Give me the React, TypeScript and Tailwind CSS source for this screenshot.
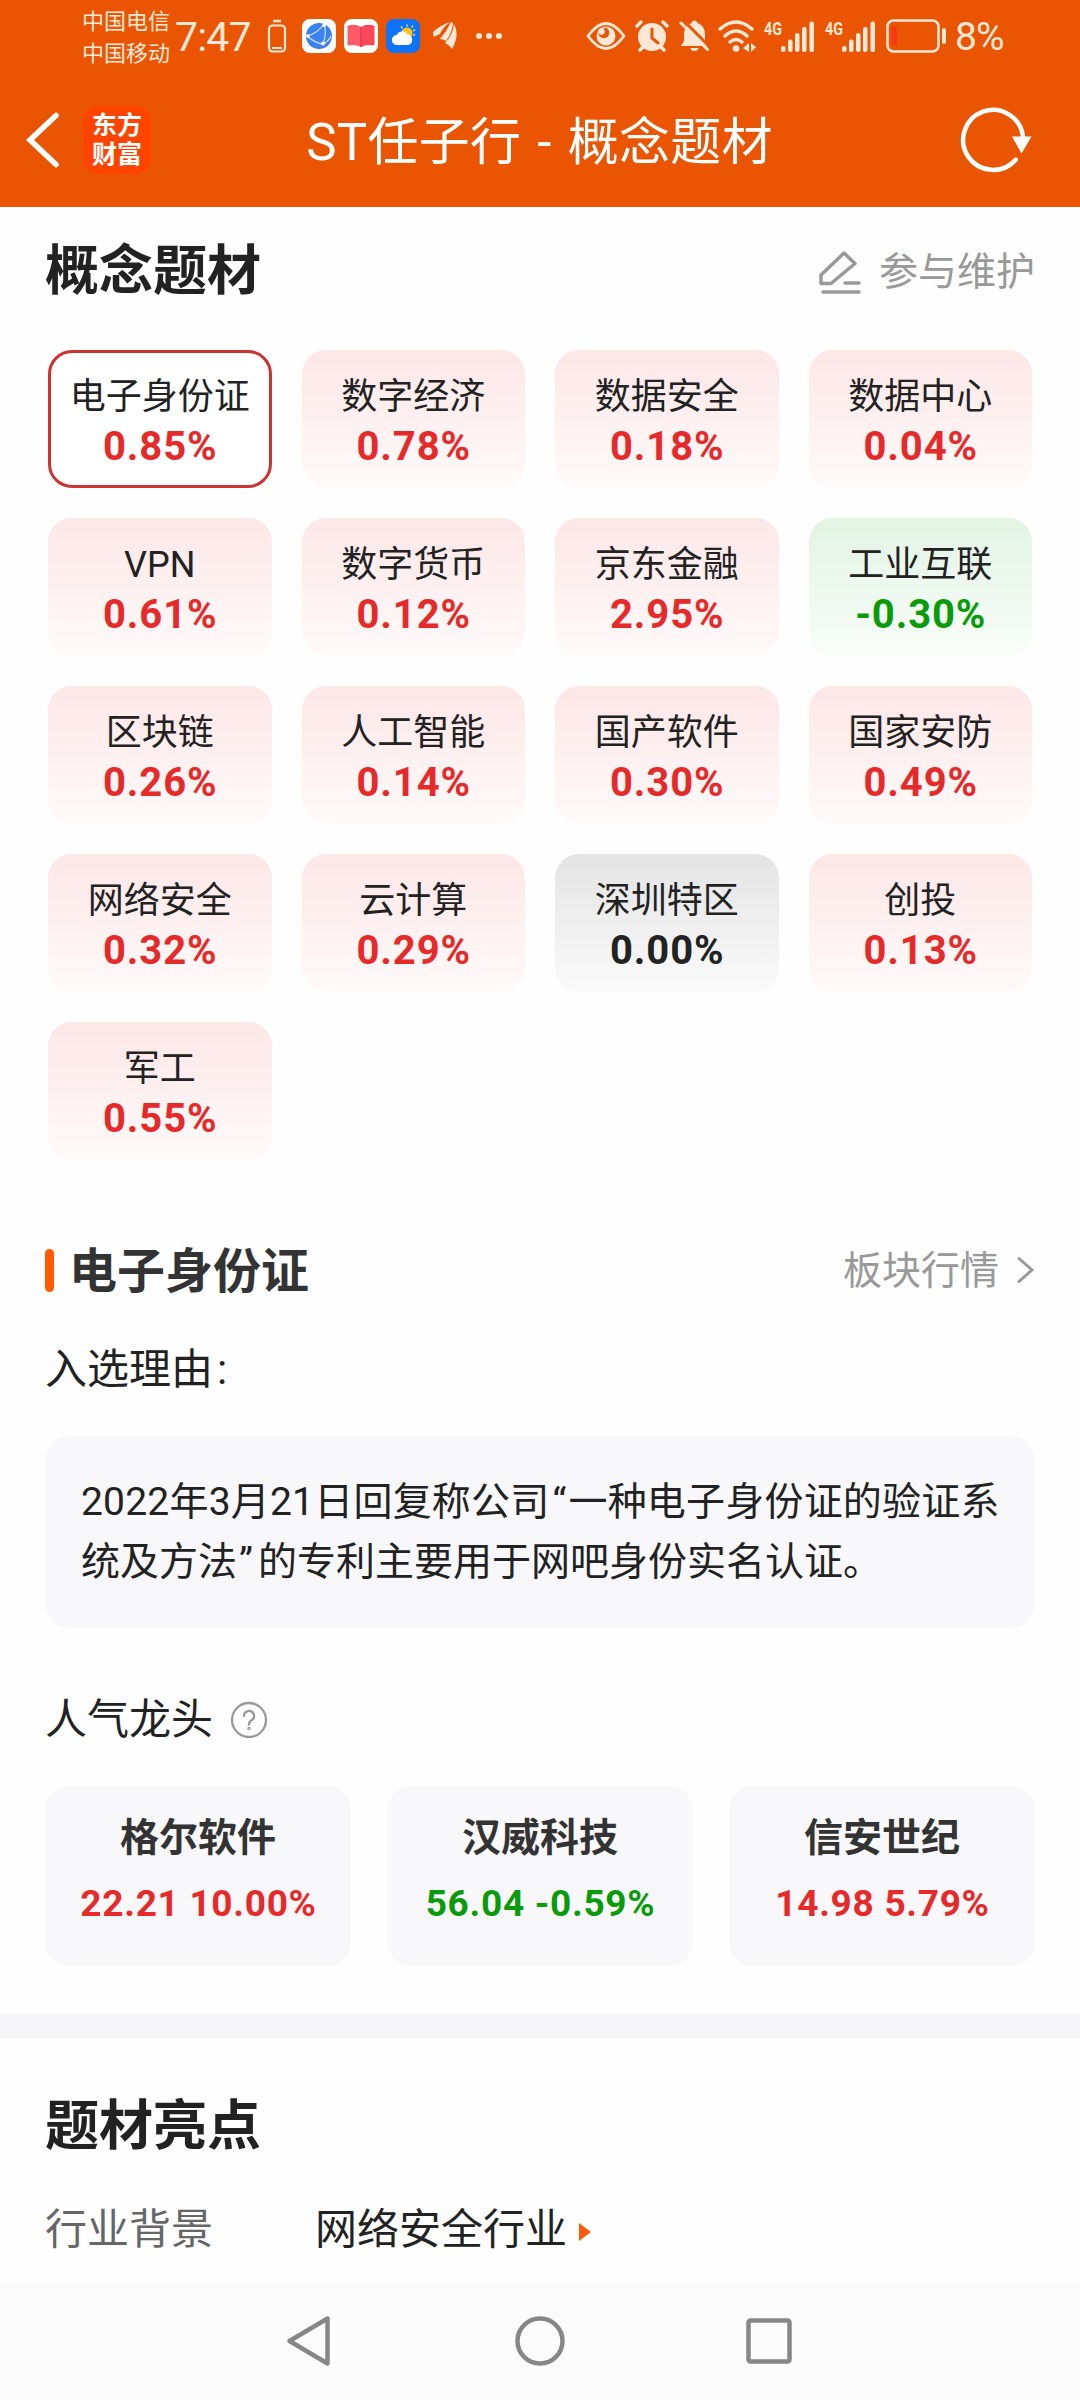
import { clsx } from "clsx";

interface Concept {
  name: string;
  change: string;
}

interface Stock {
  name: string;
  price: string;
  change: string;
}

const concepts: Concept[] = [
  { name: "电子身份证", change: "0.85%" },
  { name: "数字经济", change: "0.78%" },
  { name: "数据安全", change: "0.18%" },
  { name: "数据中心", change: "0.04%" },
  { name: "VPN", change: "0.61%" },
  { name: "数字货币", change: "0.12%" },
  { name: "京东金融", change: "2.95%" },
  { name: "工业互联", change: "-0.30%" },
  { name: "区块链", change: "0.26%" },
  { name: "人工智能", change: "0.14%" },
  { name: "国产软件", change: "0.30%" },
  { name: "国家安防", change: "0.49%" },
  { name: "网络安全", change: "0.32%" },
  { name: "云计算", change: "0.29%" },
  { name: "深圳特区", change: "0.00%" },
  { name: "创投", change: "0.13%" },
  { name: "军工", change: "0.55%" },
];

const stocks: Stock[] = [
  { name: "格尔软件", price: "22.21", change: "10.00%" },
  { name: "汉威科技", price: "56.04", change: "-0.59%" },
  { name: "信安世纪", price: "14.98", change: "5.79%" },
];

function trend(change: string) {
  const value = parseFloat(change);
  if (value > 0) return "up";
  return value < 0 ? "down" : "flat";
}

const textColor = {
  up: "text-[#e62a2a]",
  down: "text-[#0a9b0a]",
  flat: "text-[#222222]",
};

const cardColor = {
  up: "from-[#fde7e7] to-[#fffafa]",
  down: "from-[#e2f4e4] to-[#f9fdf9]",
  flat: "from-[#e4e4e4] to-[#fafafa]",
};

function Signal() {
  return (
    <svg width="51" height="42" viewBox="0 -4 51 42" fill="#ffe8d6">
      <text x="0" y="15.500" fontSize="19" fontWeight="bold" fontFamily="Roboto, sans-serif" textLength="18" lengthAdjust="spacingAndGlyphs">
        4G
      </text>
      <rect x="17" y="27" width="4.5" height="6" rx="2" />
      <rect x="24" y="20.5" width="4.5" height="12.5" rx="2" />
      <rect x="31" y="14" width="4.5" height="19" rx="2" />
      <rect x="38" y="8" width="4.5" height="25" rx="2" />
      <rect x="45.5" y="2.5" width="4.5" height="30.5" rx="2" />
    </svg>
  );
}

function StatusBar() {
  return (
    <div className="flex h-[72px] items-center pl-[82px] text-[#ffe8d6]">
      <div className="flex w-[93px] flex-col pt-[3px] text-[22px] leading-[32px]">
        <span>中国电信</span>
        <span>中国移动</span>
      </div>
      <span className="w-[86px] pt-[3px] text-[41px] leading-none tracking-[-0.8px] whitespace-nowrap">7:47</span>

      <div className="flex flex-1 items-center">
        <svg className="ml-[6px]" width="20" height="34" viewBox="0 0 20 34" fill="none" stroke="currentColor">
          <path d="M6 2h8" strokeWidth="2.5" />
          <rect x="2" y="6.5" width="16" height="26" rx="3.5" strokeWidth="2.2" />
          <path d="M5 29h10" strokeWidth="2" />
        </svg>
        <svg className="ml-[15px]" width="34" height="34" viewBox="0 0 34 34">
          <rect width="34" height="34" rx="8" fill="#fff" />
          <circle cx="17" cy="17" r="13" fill="#3c82ef" />
          <g fill="none" stroke="#d9e8ff" strokeWidth="1.1">
            <path d="M5 17Q16 14 22 5M5 17Q13 24 21 25M21 25Q25 15 22 5M21 25Q27 22 29 17" />
          </g>
          <circle cx="22" cy="6.500" r="1.8" fill="#fff" />
          <circle cx="6" cy="17" r="1.8" fill="#fff" />
          <circle cx="21" cy="24.500" r="2" fill="#fff" />
        </svg>
        <svg className="ml-2" width="34" height="34" viewBox="0 0 34 34">
          <rect width="34" height="34" rx="8" fill="#fff" />
          <path d="M3.500 7Q11 4 17 8V28Q11 25 5 26.500Q3.500 26.500 3.500 25Z" fill="#ff5a68" />
          <path d="M30.500 7Q23 4 17 8V28Q23 25 29 26.500Q30.500 26.500 30.500 25Z" fill="#f8485a" />
          <path d="M17 8V28" stroke="#d8324a" strokeWidth="1.2" />
        </svg>
        <svg className="ml-2" width="34" height="34" viewBox="0 0 34 34">
          <rect width="34" height="34" rx="8" fill="#0a74fb" />
          <g stroke="#ffd23c" strokeWidth="1.6" strokeLinecap="round">
            <path d="M21 6v1M15.500 8l.6.8M26.500 7l-.5 1M28.500 11l-.9.5M28.500 16l-.9-.3" />
          </g>
          <circle cx="21" cy="14" r="5.500" fill="#ffc21f" />
          <path d="M11 26a5 5 0 0 1-.3-10 6 6 0 0 1 10.600-.8A5.500 5.500 0 0 1 22 26Z" fill="#fff" />
        </svg>
        {/* three swept feathers */}
        <svg className="ml-[13px]" width="26" height="30" viewBox="0 0 26 30" fill="currentColor">
          <path d="M0 11Q8 4 17 1Q9 7 7 13Q4 14 1 16Q0 14 0 11Z" />
          <path d="M7 18Q14 10 18 1L20 2Q19 12 13 20Q10 18 7 18Z" />
          <path d="M21 3Q27 14 19 28Q16 24 12 22Q20 14 21 3Z" />
        </svg>
        <svg className="ml-[16px]" width="28" height="8" viewBox="0 0 28 8" fill="currentColor">
          <circle cx="4" cy="4" r="3" />
          <circle cx="14" cy="4" r="3" />
          <circle cx="24" cy="4" r="3" />
        </svg>
      </div>

      <div className="flex w-[494px] items-center">
        <svg width="40" height="28" viewBox="0 0 40 28">
          <path d="M2 14Q20-11 38 14Q20 39 2 14Z" fill="none" stroke="currentColor" strokeWidth="2.8" strokeLinejoin="round" />
          <circle cx="20" cy="14" r="9.500" fill="currentColor" />
          <path d="M12.500 9.500a5.500 5.500 0 1 0 7-4l-1.500 1Z" fill="#ea5504" />
          <circle cx="15.500" cy="9.500" r="3.200" fill="currentColor" />
        </svg>
        <svg className="ml-[9px]" width="34" height="32" viewBox="0 0 34 32">
          <circle cx="17" cy="17" r="14" fill="currentColor" />
          <g fill="none" stroke="currentColor" strokeWidth="3.500" strokeLinecap="round">
            <path d="M2 6l4-4M32 6l-4-4M5 30l3-3M29 30l-3-3" />
          </g>
          <path d="M17 9v9l6 5" fill="none" stroke="#ea5504" strokeWidth="3" strokeLinecap="round" />
        </svg>
        <svg className="ml-[10px]" width="31" height="34" viewBox="0 0 31 34">
          <path d="M15.500 1.500a3 3 0 0 1 3 2.500Q26 7 26 15V22L29 27H2L5 22V15Q5 7 12.500 4a3 3 0 0 1 3-2.500Z" fill="currentColor" />
          <path d="M11.500 29h8a4 3 0 0 1-8 0Z" fill="currentColor" />
          <path d="M3 0L32 29" stroke="#ea5504" strokeWidth="3" />
          <path d="M2 4L28.500 30.500" stroke="currentColor" strokeWidth="3" strokeLinecap="round" />
        </svg>
        <svg className="ml-[8px]" width="40" height="34" viewBox="0 0 40 34" fill="none" stroke="currentColor">
          <g strokeWidth="3.500" strokeLinecap="round">
            <path d="M2 10Q18-4 34 10" />
            <path d="M7 17Q18 7 29 17" />
            <path d="M12 23Q18 18 24 23" />
          </g>
          <circle cx="18" cy="29.500" r="3.300" fill="currentColor" stroke="none" />
          <path d="M31 24v9l-6-4ZM33 24v9l5-5Z" fill="currentColor" stroke="none" />
        </svg>
        <div className="ml-[6px] flex gap-[10px]">
          <Signal />
          <Signal />
        </div>
        <svg className="ml-[10px]" width="62" height="34" viewBox="0 0 62 34">
          <rect x="1.500" y="1.500" width="51" height="31" rx="6" fill="none" stroke="currentColor" strokeWidth="2.500" />
          <rect x="5.500" y="7.500" width="5.500" height="19" rx="2.500" fill="#ff3414" />
          <rect x="56" y="9" width="4" height="16" rx="2" fill="currentColor" />
        </svg>
        <span className="ml-[7px] pt-[3px] text-[39px] leading-none tracking-[-1px]">8%</span>
      </div>
    </div>
  );
}

function Header() {
  return (
    <header className="h-[207px] shrink-0 bg-[#ea5504]">
      <StatusBar />
      <div className="flex h-[135px] items-center pr-12 pl-6 text-white">
        <svg width="38" height="60" viewBox="0 0 38 60" fill="none" stroke="currentColor" strokeWidth="5.500">
          <path d="M32 5.500L6 30L32 54.500" strokeLinecap="round" />
        </svg>
        <div className="ml-[21px] flex h-[68px] w-[68px] flex-col items-center justify-center rounded-[15px] bg-[#ff4400] text-[25px] leading-[29px] font-bold">
          <span>东方</span>
          <span>财富</span>
        </div>
        <h1 className="flex-1 pt-[6px] pr-[32px] text-center text-[51px] leading-[70px] tracking-[0.3px] whitespace-nowrap [word-spacing:3px]">
          ST任子行 - 概念题材
        </h1>
        <svg width="72" height="68" viewBox="0 0 72 68">
          <path d="M63 31A30 30 0 1 0 55.700 53.700" fill="none" stroke="currentColor" strokeWidth="4.500" strokeLinecap="round" />
          <path d="M52 30.500H71.500L61.500 47.500Z" fill="currentColor" />
        </svg>
      </div>
    </header>
  );
}

function ConceptCard({ name, change, selected }: Concept & { selected: boolean }) {
  const direction = trend(change);
  return (
    <div
      className={clsx(
        "flex h-[138px] flex-col items-center justify-center rounded-3xl pt-[5px]",
        selected ? "border-[3px] border-[#cc3333] bg-white" : "bg-linear-to-b",
        !selected && cardColor[direction],
      )}
    >
      <span className="text-4xl leading-[50px] whitespace-nowrap">{name}</span>
      <span className={clsx("pl-px text-[40px] leading-[50px] font-bold tracking-[0.9px]", textColor[direction])}>{change}</span>
    </div>
  );
}

function StockCard({ name, price, change }: Stock) {
  return (
    <div className="flex h-[180px] flex-col items-center rounded-3xl bg-[#f8f8fa] pt-[21px] font-bold">
      <span className="text-[39px] leading-[62px] text-[#333333]">{name}</span>
      <span className={clsx("pl-px text-[37px] leading-[70px] tracking-[0.7px] whitespace-nowrap", textColor[trend(change)])}>
        {price} {change}
      </span>
    </div>
  );
}

function NavBar() {
  return (
    <nav className="mt-auto flex h-[118px] items-center justify-center gap-[179px] bg-[#fcfcfc]">
      <svg width="50" height="52" viewBox="0 0 50 52" fill="none" stroke="#878787" strokeWidth="4.500" strokeLinejoin="round">
        <path d="M41.500 3.500V48.500L3.500 26Z" />
      </svg>
      <svg width="50" height="50" viewBox="0 0 50 50" fill="none" stroke="#878787" strokeWidth="4.500">
        <circle cx="25" cy="25" r="22.500" />
      </svg>
      <svg width="50" height="50" viewBox="0 0 50 50" fill="none" stroke="#878787" strokeWidth="4.500">
        <rect x="4.500" y="4.500" width="41" height="41" rx="2" />
      </svg>
    </nav>
  );
}

export default function App() {
  return (
    <div className="flex h-[2400px] w-[1080px] flex-col overflow-hidden bg-[#fefefe] font-[Roboto,'Noto_Sans_CJK_SC',sans-serif] text-[#222222]">
      <Header />

      <section className="px-[45px]">
        <div className="flex h-[123px] items-center justify-between pt-[6px]">
          <h2 className="text-[54px] leading-[72px] font-bold">概念题材</h2>
          <div className="flex items-center gap-[17px] text-[39px] text-[#999999]">
            <svg width="44" height="44" viewBox="0 0 44 44" fill="none" stroke="currentColor" strokeWidth="3.500" strokeLinecap="round" strokeLinejoin="round">
              <path d="M26 3L37 13.500L13 33.500H3V25Z" />
              <path d="M27 33H41M5 42H41" />
            </svg>
            <span className="pt-[2px]">参与维护</span>
          </div>
        </div>

        <div className="mx-[3px] mt-5 grid grid-cols-4 gap-[30px]">
          {concepts.map((concept, index) => (
            <ConceptCard key={concept.name} {...concept} selected={index === 0} />
          ))}
        </div>

        <div className="mt-20 flex h-[60px] items-center">
          <div className="h-[43px] w-[9px] rounded-full bg-[#ff5a00]" />
          <h3 className="ml-[15px] flex-1 pt-[3px] text-5xl leading-[60px] font-bold text-[#333333]">电子身份证</h3>
          <span className="pt-[2px] text-[39px] text-[#999999]">板块行情</span>
          <svg className="ml-[14px]" width="22" height="32" viewBox="0 0 22 32" fill="none" stroke="#999999" strokeWidth="3" strokeLinecap="round">
            <path d="M6 4.500L19 16L6 27.500" />
          </svg>
        </div>

        <p className="mt-[40px] text-[42px] leading-[60px]">
          入选理由<span className="ml-1">:</span>
        </p>
        <div className="mt-[36px] flex h-[192px] flex-col justify-center rounded-3xl bg-[#f8f8fa] pl-9 text-[39px] leading-[60px] whitespace-nowrap">
          <p className="tracking-[0.2px]">
            2022年3月21日回复称公司<span className="mr-[2px] ml-[3px]">“</span>一种电子身份证的验证系
          </p>
          <p>
            统及方法<span className="mr-[5px] ml-[2px]">”</span>的专利主要用于网吧身份实名认证。
          </p>
        </div>

        <div className="mt-[61px] flex h-[60px] items-center text-[42px]">
          <span className="pt-px">人气龙头</span>
          <svg className="ml-[17px]" width="38" height="38" viewBox="0 0 38 38" fill="none" stroke="#999999" strokeWidth="2.300" strokeLinecap="round">
            <circle cx="19" cy="20" r="17" />
            <path d="M14 16a5 5 0 1 1 7.500 4.300Q19 22 19 24.500" />
            <circle cx="19" cy="28.500" r="0.600" />
          </svg>
        </div>
        <div className="mt-[37px] grid grid-cols-3 gap-9">
          {stocks.map((stock) => (
            <StockCard key={stock.name} {...stock} />
          ))}
        </div>
      </section>

      <div className="mt-12 h-6 shrink-0 bg-[#f7f7fa]" />

      <section className="px-[45px] pt-[53px]">
        <h2 className="text-[54px] leading-[72px] font-bold">题材亮点</h2>
        <div className="mt-[36px] flex h-[60px] items-center text-[42px]">
          <span className="w-[270px] text-[#666666]">行业背景</span>
          <span>网络安全行业</span>
          <svg className="mt-[5px] ml-3" width="13" height="18" viewBox="0 0 13 18" fill="#fa5a0a">
            <path d="M0 0L12 9L0 18Z" />
          </svg>
        </div>
      </section>

      <NavBar />
    </div>
  );
}
